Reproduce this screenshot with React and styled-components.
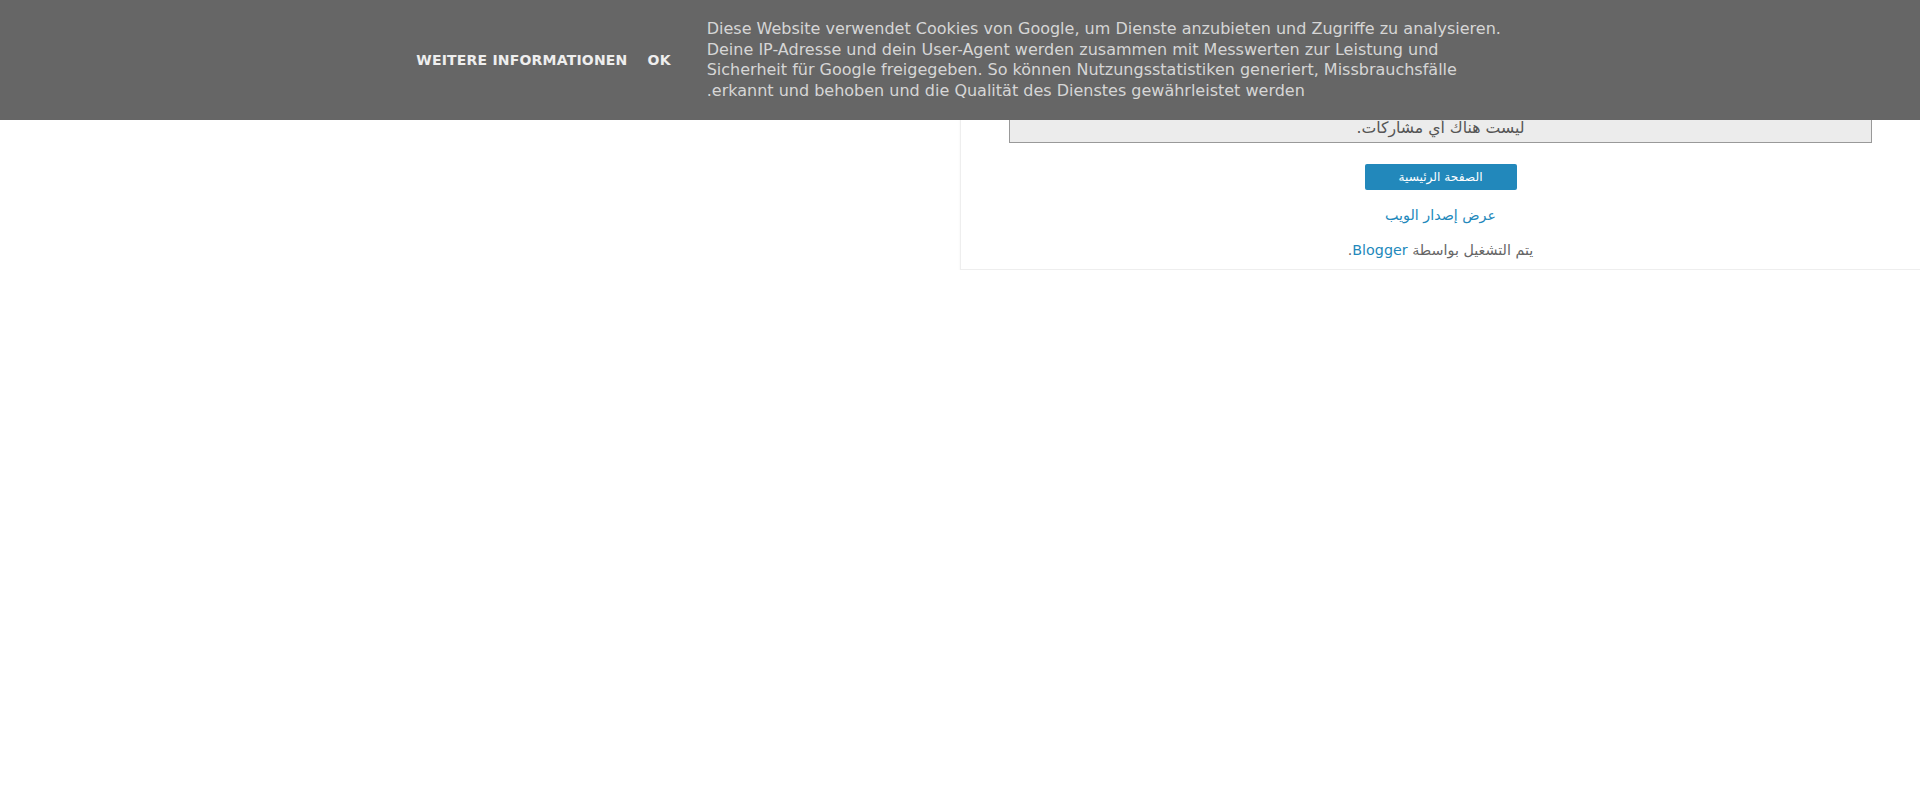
import React from "react";
import styled, { createGlobalStyle } from "styled-components";

const GlobalStyle = createGlobalStyle`
    html, body {
        margin: 0;
        padding: 0;
        background: #fff;
        font-family: "DejaVu Sans", Verdana, sans-serif;
    }
`;

const CookieBar = styled.div`
    position: fixed;
    top: 0;
    left: 0;
    right: 0;
    height: 120px;
    z-index: 10;
    background-color: #666;
    display: flex;
    align-items: center;
    justify-content: center;
    padding-left: 9px;
    box-sizing: border-box;
`;

const CookieButtons = styled.div`
    display: flex;
    gap: 20px;
    margin-right: 36px;
    white-space: nowrap;
`;

const CookieButton = styled.a`
    color: #eee;
    font-size: 14px;
    font-weight: bold;
    letter-spacing: 0.2px;
    text-transform: uppercase;
    text-decoration: none;
    cursor: pointer;
`;

const CookieText = styled.p`
    margin: 0;
    width: 806px;
    direction: rtl;
    text-align: left;
    color: #d6d6d6;
    font-size: 16px;
    line-height: 20.5px;
`;

const Page = styled.div`
    direction: rtl;
`;

const Panel = styled.div`
    width: 960px;
    margin-left: auto;
    box-sizing: border-box;
    padding: 105px 0 10px;
    background: #fff;
    border: 1px solid #eee;
    border-right: 0;
    box-shadow: 0 1px 2px rgba(0, 0, 0, 0.06);
`;

const StatusMsg = styled.div`
    width: 90%;
    margin: 10px auto 0;
    box-sizing: border-box;
    border: 1px solid #999;
    background: #ececec;
    color: #555;
    text-align: center;
    font-size: 15.7px;
    line-height: 17px;
    padding: 2px 0 6px;
`;

const Footer = styled.div`
    display: flex;
    flex-direction: column;
    align-items: center;
    padding-top: 21px;
    color: #666;
    font-size: 14.3px;
`;

const HomeButton = styled.a`
    display: flex;
    align-items: center;
    justify-content: center;
    width: 152px;
    height: 26px;
    border-radius: 2px;
    background-color: #2288bb;
    color: #fff;
    font-size: 12.2px;
    text-decoration: none;
`;

const FooterLine = styled.div`
    margin-top: ${(p) => p.$gap}px;
    height: 18px;
    line-height: 18px;
`;

const Link = styled.a`
    color: #2288bb;
    text-decoration: none;
`;

export default function App() {
    return (
        <>
            <GlobalStyle />
            <CookieBar>
                <CookieButtons>
                    <CookieButton>Weitere Informationen</CookieButton>
                    <CookieButton>OK</CookieButton>
                </CookieButtons>
                <CookieText>
                    Diese Website verwendet Cookies von Google, um Dienste anzubieten und Zugriffe zu analysieren. Deine
                    IP-Adresse und dein User-Agent werden zusammen mit Messwerten zur Leistung und Sicherheit für Google
                    freigegeben. So können Nutzungsstatistiken generiert, Missbrauchsfälle erkannt und behoben und die
                    Qualität des Dienstes gewährleistet werden.
                </CookieText>
            </CookieBar>
            <Page>
                <Panel>
                    <StatusMsg>ليست هناك أي مشاركات.</StatusMsg>
                    <Footer>
                        <HomeButton>الصفحة الرئيسية</HomeButton>
                        <FooterLine $gap={16}>
                            <Link>عرض إصدار الويب</Link>
                        </FooterLine>
                        <FooterLine $gap={17}>
                            يتم التشغيل بواسطة <Link>Blogger</Link>.
                        </FooterLine>
                    </Footer>
                </Panel>
            </Page>
        </>
    );
}
